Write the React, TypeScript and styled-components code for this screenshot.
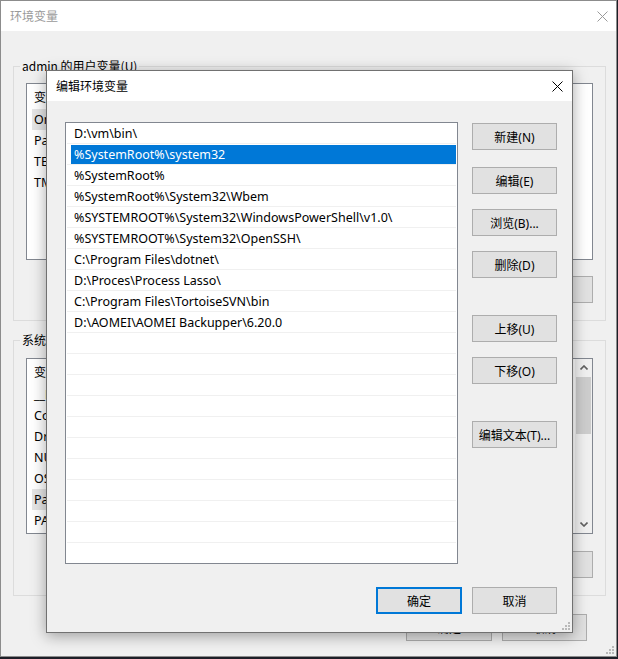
import React from "react";
import styled, { createGlobalStyle } from "styled-components";

const FONT = `"Noto Sans", "Noto Sans CJK SC", sans-serif`;

const Global = createGlobalStyle`
  html, body { margin: 0; padding: 0; }
  body { background: #1d1e27; font-family: ${FONT}; font-size: 12px; color: #000; }
  * { box-sizing: border-box; }
`;

const Desktop = styled.div`
  position: relative;
  width: 618px;
  height: 659px;
  overflow: hidden;
  background: #1d1e27;
`;

const MainWindow = styled.div`
  position: relative;
  width: 617px;
  height: 657px;
  background: #f0f0f0;
  border: 1px solid #8c8c8c;
  display: flex;
  flex-direction: column;
`;

const TitleBar = styled.div<{ $active?: boolean }>`
  flex: none;
  height: 30px;
  background: #fff;
  display: flex;
  align-items: center;
  justify-content: space-between;
  padding: 0 ${(p) => (p.$active ? 9 : 8)}px 0 9px;
  color: ${(p) => (p.$active ? "#000" : "#9a9a9a")};
  font-family: "Noto Sans CJK SC", sans-serif;
  font-size: 12px;
`;

const Title = styled.span`
  line-height: 16px;
`;

const CloseIcon = ({ color }: { color: string }) => (
  <svg width="11" height="11" viewBox="0 0 11 11">
    <path d="M0.5 0.5 L10.5 10.5 M10.5 0.5 L0.5 10.5" stroke={color} strokeWidth="1" />
  </svg>
);

const MainBody = styled.div`
  flex: 1;
  display: flex;
  flex-direction: column;
  padding: 0 10px 0 12px;
`;

const Group = styled.div<{ $mt: number }>`
  margin-top: ${(p) => p.$mt}px;
  border: 1px solid #dcdcdc;
  padding: 0 12px 17px;
  display: flex;
  flex-direction: column;
`;

const Legend = styled.div`
  align-self: flex-start;
  margin: -9px 0 0 -6px;
  height: 16px;
  line-height: 16px;
  padding: 0 2px;
  background: #f0f0f0;
  font-family: "Noto Sans CJK SC", sans-serif;
`;

const BgList = styled.div<{ $mt: number; $h: number }>`
  margin-top: ${(p) => p.$mt}px;
  height: ${(p) => p.$h}px;
  border: 1px solid #828790;
  background: #fff;
  display: flex;
  overflow: hidden;
`;

const BgListBody = styled.div`
  flex: 1;
  min-width: 0;
  display: flex;
  flex-direction: column;
`;

const BgHeader = styled.div`
  flex: none;
  height: 25px;
  display: flex;
  align-items: center;
  padding-left: 7px;
  font-family: "Noto Sans CJK SC", sans-serif;
`;

const BgRow = styled.div`
  flex: none;
  height: 21px;
  margin: 0 4px 0 5px;
  display: flex;
  font-size: 12.5px;
  white-space: nowrap;
`;

const NameCell = styled.span<{ $sel?: boolean }>`
  width: 190px;
  flex: none;
  padding-left: 2px;
  display: flex;
  align-items: center;
  background: ${(p) => (p.$sel ? "#e5e5e5" : "transparent")};
`;

const ScrollBar = styled.div`
  flex: none;
  width: 17px;
  background: #f0f0f0;
  display: flex;
  flex-direction: column;
  align-items: center;
`;

const ArrowBox = styled.div`
  height: 17px;
  width: 17px;
  display: flex;
  align-items: center;
  justify-content: center;
`;

const Thumb = styled.div`
  margin-top: 1px;
  width: 15px;
  height: 57px;
  background: #cdcdcd;
`;

const ScrollGap = styled.div`
  flex: 1;
`;

const Chevron = ({ up }: { up?: boolean }) => (
  <svg width="8" height="5" viewBox="0 0 8 5">
    <path
      d={up ? "M0.5 4.5 L4 1 L7.5 4.5" : "M0.5 0.5 L4 4 L7.5 0.5"}
      stroke="#606060"
      strokeWidth="1.6"
      fill="none"
    />
  </svg>
);

const ButtonRow = styled.div<{ $mt: number; $pr?: number }>`
  margin-top: ${(p) => p.$mt}px;
  padding-right: ${(p) => p.$pr ?? 0}px;
  display: flex;
  justify-content: flex-end;
  gap: 10px;
`;

const Button = styled.div<{ $def?: boolean; $w?: number; $mt?: number }>`
  flex: none;
  width: ${(p) => p.$w ?? 85}px;
  height: 27px;
  margin-top: ${(p) => p.$mt ?? 0}px;
  background: #e1e1e1;
  border: ${(p) => (p.$def ? "2px solid #0078d7" : "1px solid #adadad")};
  display: flex;
  align-items: center;
  justify-content: center;
  font-size: 12px;
  white-space: nowrap;
`;

const Grip = styled.div`
  position: absolute;
  right: 2px;
  bottom: 2px;
  width: 9px;
  height: 9px;
  line-height: 0;
`;

const GripIcon = () => (
  <svg width="9" height="9" viewBox="0 0 9 9">
    {[
      [6, 0],
      [3, 3],
      [6, 3],
      [0, 6],
      [3, 6],
      [6, 6],
    ].map(([x, y], i) => (
      <rect key={i} x={x + 1} y={y + 1} width="2" height="2" fill="#b9b9b9" />
    ))}
  </svg>
);

const Dialog = styled.div`
  position: absolute;
  left: 46px;
  top: 70px;
  width: 527px;
  height: 563px;
  background: #f0f0f0;
  border: 1px solid #717171;
  box-shadow: 0 3px 14px rgba(0, 0, 0, 0.35);
  display: flex;
  flex-direction: column;
`;

const DialogBody = styled.div`
  flex: 1;
  display: grid;
  grid-template-columns: 393px 85px;
  grid-template-rows: 442px 27px;
  column-gap: 14px;
  row-gap: 23px;
  padding: 21px 15px 18px 18px;
`;

const PathList = styled.div`
  border: 1px solid #828790;
  background: #fff;
  padding: 0 1px;
  overflow: hidden;
`;

const PathRow = styled.div`
  height: 21px;
  border-bottom: 1px solid #f0f0f0;
  padding-left: 4px;
  display: flex;
`;

const PathCell = styled.div<{ $sel?: boolean }>`
  flex: 1;
  margin-top: 1px;
  padding-left: 3px;
  display: flex;
  align-items: center;
  font-size: 12.5px;
  background: ${(p) => (p.$sel ? "#0078d7" : "transparent")};
  color: ${(p) => (p.$sel ? "#fff" : "#000")};
  white-space: nowrap;
`;

const SideButtons = styled.div`
  display: flex;
  flex-direction: column;
`;

const DialogFooter = styled.div`
  grid-column: 1 / span 2;
  display: flex;
  justify-content: flex-end;
  gap: 10px;
`;

const paths = [
  "D:\\vm\\bin\\",
  "%SystemRoot%\\system32",
  "%SystemRoot%",
  "%SystemRoot%\\System32\\Wbem",
  "%SYSTEMROOT%\\System32\\WindowsPowerShell\\v1.0\\",
  "%SYSTEMROOT%\\System32\\OpenSSH\\",
  "C:\\Program Files\\dotnet\\",
  "D:\\Proces\\Process Lasso\\",
  "C:\\Program Files\\TortoiseSVN\\bin",
  "D:\\AOMEI\\AOMEI Backupper\\6.20.0",
];

const userVars = ["OneDrive", "Path", "TEMP", "TMP"];

const sysVars = [
  "__PSLockdownPolicy",
  "ComSpec",
  "DriverData",
  "NUMBER_OF_PROCESSORS",
  "OS",
  "Path",
  "PATHEXT",
];

const sideButtons: [string, number][] = [
  ["新建(N)", 1],
  ["编辑(E)", 17],
  ["浏览(B)...", 15],
  ["删除(D)", 15],
  ["上移(U)", 37],
  ["下移(O)", 15],
  ["编辑文本(T)...", 37],
];

export default function App() {
  const rows = [...paths, ...Array(11).fill("")];
  return (
    <>
      <Global />
      <Desktop>
        <MainWindow>
          <TitleBar>
            <Title>环境变量</Title>
            <CloseIcon color="#9a9a9a" />
          </TitleBar>
          <MainBody>
            <Group $mt={35}>
              <Legend>admin 的用户变量(U)</Legend>
              <BgList $mt={9} $h={177}>
                <BgListBody>
                  <BgHeader>变量</BgHeader>
                  {userVars.map((n, i) => (
                    <BgRow key={n}>
                      <NameCell $sel={i === 0}>{n}</NameCell>
                    </BgRow>
                  ))}
                </BgListBody>
              </BgList>
              <ButtonRow $mt={16}>
                <Button>新建(N)...</Button>
                <Button>编辑(E)...</Button>
                <Button>删除(D)</Button>
              </ButtonRow>
            </Group>
            <Group $mt={19}>
              <Legend>系统变量(S)</Legend>
              <BgList $mt={10} $h={176}>
                <BgListBody>
                  <BgHeader>变量</BgHeader>
                  {sysVars.map((n) => (
                    <BgRow key={n}>
                      <NameCell $sel={n === "Path"}>{n}</NameCell>
                    </BgRow>
                  ))}
                </BgListBody>
                <ScrollBar>
                  <ArrowBox>
                    <Chevron up />
                  </ArrowBox>
                  <Thumb />
                  <ScrollGap />
                  <ArrowBox>
                    <Chevron />
                  </ArrowBox>
                </ScrollBar>
              </BgList>
              <ButtonRow $mt={17}>
                <Button>新建(W)...</Button>
                <Button>编辑(I)...</Button>
                <Button>删除(L)</Button>
              </ButtonRow>
            </Group>
            <ButtonRow $mt={18} $pr={19}>
              <Button $w={86}>确定</Button>
              <Button>取消</Button>
            </ButtonRow>
          </MainBody>
          <Grip>
            <GripIcon />
          </Grip>
        </MainWindow>

        <Dialog>
          <TitleBar $active>
            <Title>编辑环境变量</Title>
            <CloseIcon color="#000" />
          </TitleBar>
          <DialogBody>
            <PathList>
              {rows.map((p, i) => (
                <PathRow key={i}>
                  <PathCell $sel={i === 1}>{p}</PathCell>
                </PathRow>
              ))}
            </PathList>
            <SideButtons>
              {sideButtons.map(([label, mt]) => (
                <Button key={label} $mt={mt}>
                  {label}
                </Button>
              ))}
            </SideButtons>
            <DialogFooter>
              <Button $def $w={86}>
                确定
              </Button>
              <Button>取消</Button>
            </DialogFooter>
          </DialogBody>
          <Grip>
            <GripIcon />
          </Grip>
        </Dialog>
      </Desktop>
    </>
  );
}
